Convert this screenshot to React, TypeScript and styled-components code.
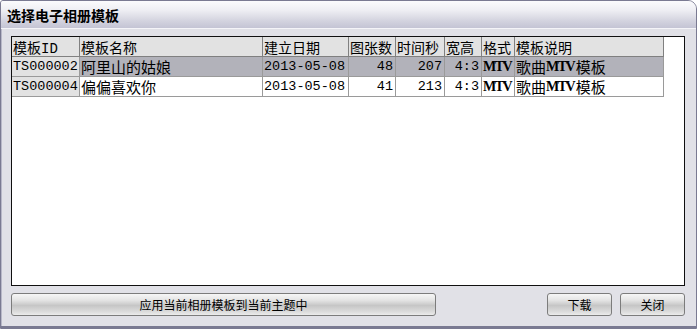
import React from 'react';
import styled, {createGlobalStyle, css} from 'styled-components';

const GlobalStyle = createGlobalStyle`
    html, body {
        margin: 0;
        padding: 0;
        background: #ffffff;
    }
`;

const CJK = `"Noto Sans CJK SC", "Noto Sans", sans-serif`;
const MONO = `"Liberation Mono", "Noto Sans CJK SC", monospace`;

const COLUMNS = '68px 183px 86px 47px 49px 37px 33px 149px';

const Window = styled.div`
    width: 697px;
    height: 329px;
    box-sizing: border-box;
    display: flex;
    flex-direction: column;
    background: #e1e1e7;
    border: 1px solid #7a7a92;
    border-top-right-radius: 9px;
    border-top-left-radius: 3px;
    overflow: hidden;
    font-family: ${CJK};
`;

const TitleBar = styled.div`
    height: 27px;
    flex: none;
    display: flex;
    align-items: center;
    padding-left: 6px;
    background: linear-gradient(#fbfbfd 0%, #eeeef3 35%, #d2d2de 75%, #c4c4d4 100%);
    border-bottom: 1px solid #f4f4f8;
    font-size: 14px;
    font-weight: bold;
    color: #000;
`;

const Body = styled.div`
    flex: 1;
    display: flex;
    flex-direction: column;
    padding: 7px 11px 0 10px;
    border-bottom: 2px solid #7a7a92;
    box-shadow: inset 1px 0 0 #b8b8c8;
`;

const GridBox = styled.div`
    height: 250px;
    box-sizing: border-box;
    border: 1px solid #101010;
    background: #ffffff;
    display: flex;
    flex-direction: column;
`;

const Row = styled.div<{$selected?: boolean}>`
    display: grid;
    grid-template-columns: ${COLUMNS};
    width: max-content;
    height: 20px;
    background: ${p => (p.$selected ? '#b2b2ba' : '#ffffff')};
`;

const HeaderRow = styled(Row)`
    background: #e2e2e2;
`;

const Cell = styled.div<{$align?: 'left' | 'right'; $fixed?: boolean; $kind?: 'cjk' | 'mono' | 'head'}>`
    box-sizing: border-box;
    border-right: 1px solid #9a9a9a;
    border-bottom: 1px solid #9a9a9a;
    padding: 0 2px 0 1px;
    display: flex;
    align-items: center;
    justify-content: ${p => (p.$align === 'right' ? 'flex-end' : 'flex-start')};
    white-space: nowrap;
    overflow: hidden;
    color: #000;
    background: ${p => (p.$fixed ? '#e2e2e2' : 'transparent')};
    ${p => p.$kind === 'mono' && css`
        font-family: ${MONO};
        font-size: 13.5px;
    `}
    ${p => p.$kind === 'cjk' && css`
        font-family: ${CJK};
        font-size: 15px;
    `}
    ${p => p.$kind === 'head' && css`
        font-family: ${MONO};
        font-size: 14px;
        border-color: #808080;
    `}
`;

const Fmt = styled.span`
    font-family: "Liberation Serif", serif;
    font-weight: bold;
    font-size: 14px;
    letter-spacing: -1.5px;
    margin-right: 1.5px;
`;

const ButtonRow = styled.div`
    display: flex;
    align-items: center;
    gap: 8px;
    margin-top: 7px;
`;

const Button = styled.button<{$wide?: boolean}>`
    height: 23px;
    width: ${p => (p.$wide ? '425px' : '65px')};
    box-sizing: border-box;
    border: 1px solid #7c7c7c;
    border-radius: 3px;
    background: linear-gradient(#f6f6f6 0%, #e4e4e4 30%, #c6c6c6 55%, #dcdcdc 85%, #ececec 100%);
    font-family: ${CJK};
    font-size: 12px;
    color: #000;
    padding: 0;
    cursor: pointer;
`;

const Spacer = styled.div`
    flex: 1;
`;

interface Template {
    id: string;
    name: string;
    date: string;
    pics: number;
    secs: number;
    ratio: string;
    format: string;
    desc: string;
}

const templates: Template[] = [
    {id: 'TS000002', name: '阿里山的姑娘', date: '2013-05-08', pics: 48, secs: 207, ratio: '4:3', format: 'MTV', desc: 'MTV'},
    {id: 'TS000004', name: '偏偏喜欢你', date: '2013-05-08', pics: 41, secs: 213, ratio: '4:3', format: 'MTV', desc: 'MTV'},
];

const headers = ['模板ID', '模板名称', '建立日期', '图张数', '时间秒', '宽高', '格式', '模板说明'];

const App: React.FC = () => (
    <>
        <GlobalStyle/>
        <Window>
            <TitleBar>{'选择电子相册模板'}</TitleBar>
            <Body>
                <GridBox>
                    <HeaderRow>
                        {headers.map(h => (
                            <Cell key={h} $kind='head'>{h}</Cell>
                        ))}
                    </HeaderRow>
                    {templates.map((t, i) => (
                        <Row key={t.id} $selected={i === 0}>
                            <Cell $kind='mono' $fixed={true}>{t.id}</Cell>
                            <Cell $kind='cjk'>{t.name}</Cell>
                            <Cell $kind='mono'>{t.date}</Cell>
                            <Cell $kind='mono' $align='right'>{t.pics}</Cell>
                            <Cell $kind='mono' $align='right'>{t.secs}</Cell>
                            <Cell $kind='mono' $align='right'>{t.ratio}</Cell>
                            <Cell $kind='mono'><Fmt>{t.format}</Fmt></Cell>
                            <Cell $kind='cjk'>{'歌曲'}<Fmt>{t.desc}</Fmt>{'模板'}</Cell>
                        </Row>
                    ))}
                </GridBox>
                <ButtonRow>
                    <Button $wide={true}>{'应用当前相册模板到当前主题中'}</Button>
                    <Spacer/>
                    <Button>{'下载'}</Button>
                    <Button>{'关闭'}</Button>
                </ButtonRow>
            </Body>
        </Window>
    </>
);

export default App;
